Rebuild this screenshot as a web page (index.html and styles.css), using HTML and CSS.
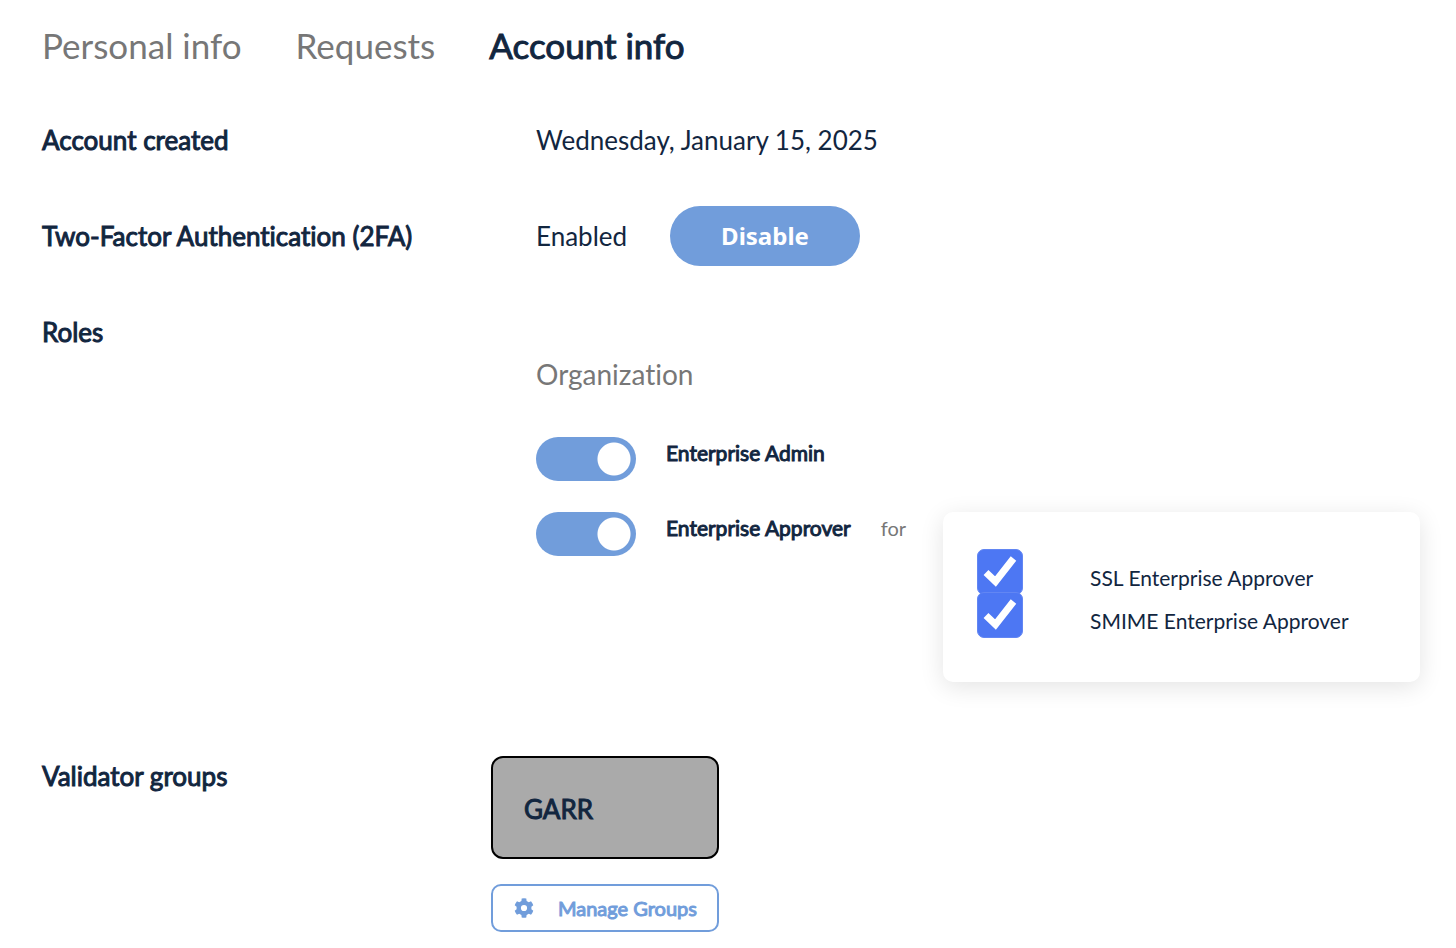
FILE: index.html
```html
<!DOCTYPE html>
<html lang="en">
<head>
<meta charset="utf-8">
<meta name="viewport" content="width=device-width, initial-scale=1">
<title>Account info</title>
<link rel="stylesheet" href="styles.css">
</head>
<body>
<main class="page">
  <nav class="tabs">
    <a class="tab" href="#personal">Personal info</a>
    <a class="tab" href="#requests">Requests</a>
    <a class="tab tab-active" href="#account" aria-current="page">Account info</a>
  </nav>

  <section class="row">
    <h2 class="label">Account created</h2>
    <p class="value">Wednesday, January 15, 2025</p>
  </section>

  <section class="row">
    <h2 class="label">Two-Factor Authentication (2FA)</h2>
    <div class="twofa">
      <p class="value">Enabled</p>
      <button class="disable" type="button">Disable</button>
    </div>
  </section>

  <section class="row row-roles">
    <h2 class="label">Roles</h2>
    <div class="roles">
      <h3 class="scope">Organization</h3>
      <div class="role">
        <input class="toggle" type="checkbox" role="switch" id="admin" checked>
        <label class="role-name" for="admin">Enterprise Admin</label>
      </div>
      <div class="role">
        <input class="toggle" type="checkbox" role="switch" id="approver" checked>
        <label class="role-name" for="approver">Enterprise Approver</label>
        <span class="for">for</span>
        <div class="card">
          <div class="option">
            <span class="check"><input class="box" type="checkbox" id="ssl" checked><svg class="tick" viewBox="0 0 46 46" aria-hidden="true"><path d="M9 23.500 18.500 32.500 36.500 9.500"/></svg></span>
            <label for="ssl">SSL Enterprise Approver</label>
          </div>
          <div class="option">
            <span class="check"><input class="box" type="checkbox" id="smime" checked><svg class="tick" viewBox="0 0 46 46" aria-hidden="true"><path d="M9 23.500 18.500 32.500 36.500 9.500"/></svg></span>
            <label for="smime">SMIME Enterprise Approver</label>
          </div>
        </div>
      </div>
    </div>
  </section>

  <section class="row row-groups">
    <h2 class="label">Validator groups</h2>
    <div class="groups">
      <div class="group">GARR</div>
      <button class="manage" type="button">
        <svg class="gear" viewBox="0 0 24 24" aria-hidden="true"><path fill-rule="evenodd" d="M9.400 4.900 9.700 2.600q2.300-.500 4.600 0l.300 2.300 2.200 1.300 2.200-.900q1.600 1.800 2.300 4l-1.900 1.500v2.400l1.900 1.500q-.700 2.200-2.300 4l-2.200-.900-2.200 1.300-.300 2.300q-2.300.500-4.600 0l-.300-2.300-2.200-1.300-2.200.900q-1.600-1.800-2.300-4l1.900-1.500v-2.400L2.700 9.300q.700-2.200 2.300-4l2.200.900zM12 8.900a3.100 3.100 0 1 0 0 6.200 3.100 3.100 0 0 0 0-6.200z"/></svg>
        Manage Groups
      </button>
    </div>
  </section>
</main>
</body>
</html>
```
FILE: styles.css
```css
* { box-sizing: border-box; }

body {
  margin: 0;
  background: #fff;
  color: #12263f;
  font-family: Lato, sans-serif;
  font-size: 26px;
  line-height: 32px;
  font-variant-ligatures: none;
}

h2, h3, p { margin: 0; font-size: inherit; }

.page { padding: 0 36px 16px 42px; }

.tabs {
  display: flex;
  gap: 54px;
  padding: 21px 0 23px;
  font-size: 35px;
  line-height: 48px;
}
.tab { color: #777; text-decoration: none; }

/* Semi-bold look built from the regular weight */
.tab-active, .label, .role-name, .group, .manage {
  font-weight: 400;
  -webkit-text-stroke: 1px currentColor;
}
.tab-active { color: #12263f; }

.row {
  display: grid;
  grid-template-columns: 494px minmax(0, 1fr);
  align-items: center;
  min-height: 96px;
}

.twofa { display: flex; align-items: center; gap: 43px; }
.disable {
  height: 60px;
  padding: 0 51px;
  border: 0;
  border-radius: 30px;
  background: #719ddb;
  color: #fff;
  font: 700 24px/32px "Noto Sans", sans-serif;
}

.row-roles { align-items: start; padding-top: 32px; }
.roles { padding-top: 39px; }
.scope {
  padding-bottom: 44px;
  color: #777;
  font-size: 28px;
  font-weight: 400;
  line-height: 38px;
}
.role {
  display: flex;
  align-items: flex-start;
  gap: 30px;
  font-size: 21px;
}
.role + .role { margin-top: 31px; }
.toggle {
  appearance: none;
  flex: none;
  width: 100px;
  height: 44px;
  margin: 0;
  border-radius: 22px;
  background: radial-gradient(circle at 78px 22px, #fff 16px, #719ddb 17px);
}
.for { color: #777; font-size: 20px; }

.card {
  flex: 1;
  margin-left: 7px;
  padding: 37px 34px 47px;
  border-radius: 10px;
  background: #fff;
  box-shadow: 0 5px 24px rgba(0, 0, 0, 0.11);
}
.option {
  display: grid;
  grid-template-columns: 46px 1fr;
  column-gap: 67px;
  height: 43px;
}
.option label { padding-top: 13px; }
.check { display: grid; height: 46px; }
.box, .tick { grid-area: 1 / 1; width: 46px; height: 46px; }
.box {
  appearance: none;
  margin: 0;
  border: 1px solid #6286f3;
  border-radius: 7px;
  background: #4d77f3;
}
.tick {
  fill: none;
  stroke: #fff;
  stroke-width: 7;
  pointer-events: none;
}

.row-groups {
  grid-template-columns: 449px minmax(0, 1fr);
  align-items: start;
  padding-top: 74px;
}
.row-groups .label { padding-top: 4px; }
.groups { display: grid; justify-content: start; gap: 25px; }
.group {
  padding: 35px 31px 32px;
  border: 2px solid #000;
  border-radius: 12px;
  background: #aaa;
}
.manage {
  display: flex;
  align-items: center;
  gap: 22px;
  height: 48px;
  padding: 0 20px 0 19px;
  border: 2px solid #719ddb;
  border-radius: 10px;
  background: #fff;
  color: #719ddb;
  font: 400 20px/32px Lato, sans-serif;
}
.gear { width: 24px; height: 24px; fill: currentColor; }
```
